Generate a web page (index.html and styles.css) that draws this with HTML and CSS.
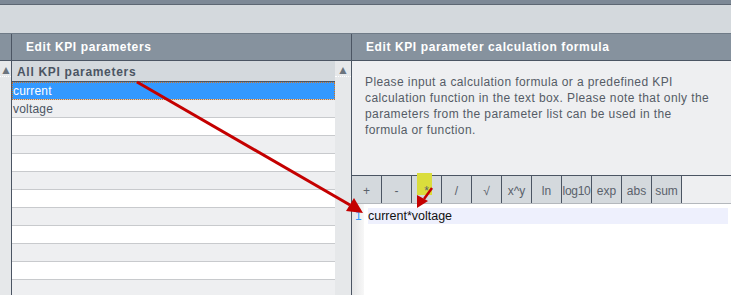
FILE: index.html
```html
<!DOCTYPE html>
<html lang="en">
  <head>
    <meta charset="UTF-8" />
    <meta name="viewport" content="width=device-width, initial-scale=1.0" />
    <title>Edit KPI parameters</title>
    <link rel="stylesheet" href="styles.css">
  </head>
  <body>
    <div class="topbar"></div>
    <div class="band"></div>

    <div class="main">
      <div class="strip">
        <div class="head"></div>
        <div class="strip-body">
          <span class="arrow-up">&#9650;</span>
        </div>
      </div>

      <div class="panel left">
        <div class="head">Edit KPI parameters</div>
        <div class="left-body">
          <div class="list">
            <div class="list-head">All KPI parameters</div>
            <div class="row selected">current</div>
            <div class="row odd">voltage</div>
            <div class="row"></div>
            <div class="row odd"></div>
            <div class="row"></div>
            <div class="row odd"></div>
            <div class="row"></div>
            <div class="row odd"></div>
            <div class="row"></div>
            <div class="row odd"></div>
            <div class="row"></div>
            <div class="row odd"></div>
          </div>
          <div class="scroll">
            <span class="arrow-up">&#9650;</span>
          </div>
        </div>
      </div>

      <div class="panel right">
        <div class="head">Edit KPI parameter calculation formula</div>
        <div class="right-body">
          <p class="hint">
            Please input a calculation formula or a predefined KPI<br>
            calculation function in the text box. Please note that only the<br>
            parameters from the parameter list can be used in the<br>
            formula or function.
          </p>
          <div class="tools">
            <button type="button">+</button>
            <button type="button">-</button>
            <button type="button" class="marked">*</button>
            <button type="button">/</button>
            <button type="button">&radic;</button>
            <button type="button">x^y</button>
            <button type="button">ln</button>
            <button type="button" class="narrow">log10</button>
            <button type="button">exp</button>
            <button type="button">abs</button>
            <button type="button">sum</button>
          </div>
          <div class="editor">
            <div class="gutter"><span class="lineno">1</span></div>
            <div class="code">
              <div class="code-line">current*voltage</div>
            </div>
          </div>
        </div>
      </div>
    </div>

    <!-- annotation arrows -->
    <svg class="notes" width="731" height="295" viewBox="0 0 731 295">
      <line x1="137" y1="82" x2="350" y2="205" stroke="#c40000" stroke-width="3" />
      <polygon points="363,213 346,211 354,198" fill="#c40000" />
      <line x1="432" y1="188" x2="424" y2="199" stroke="#c40000" stroke-width="2.5" />
      <polygon points="417,208 417,195 428,201" fill="#c40000" />
    </svg>
  </body>
</html>
```

FILE: styles.css
```css
body {
  margin: 0;
  width: 731px;
  height: 295px;
  overflow: hidden;
  position: relative;
  font-family: "Liberation Sans", Arial, sans-serif;
  font-size: 12px;
  background-color: #eeeff1;
}

.topbar {
  height: 4px;
  background-color: #7d8996;
  border-bottom: 1px solid #5d6773;
}

.band {
  height: 28px;
  background-color: #d4d9dd;
  border-bottom: 1px solid #6f7b87;
}

.main {
  display: grid;
  grid-template-columns: 11px 340px 380px;
  height: 261px;
}

.head {
  height: 26px;
  line-height: 26px;
  background-color: #86929e;
  border-bottom: 1px solid #4b5563;
  color: #ffffff;
  font-weight: bold;
  font-size: 12px;
  letter-spacing: 0.6px;
  white-space: nowrap;
}

.strip-body,
.scroll {
  background-color: #e6e8ea;
  height: 100%;
}

.strip {
  display: flex;
  flex-direction: column;
}

.strip-body {
  flex: 1;
}

.arrow-up {
  display: block;
  color: #6b747e;
  font-size: 12px;
  line-height: 10px;
  text-align: center;
  padding-top: 4px;
  padding-bottom: 1px;
  border-bottom: 1px dotted #ffffff;
}

.panel {
  border-left: 1px solid #4b5563;
  display: flex;
  flex-direction: column;
}

.left .head,
.right .head {
  padding-left: 14px;
}

.left-body {
  flex: 1;
  display: flex;
}

.list {
  width: 323px;
  background-color: #eeeff1;
}

.list-head {
  height: 20px;
  line-height: 23px;
  background-color: #d4d9dd;
  border-bottom: 1px solid #4b5563;
  color: #4b5563;
  font-weight: bold;
  font-size: 12px;
  letter-spacing: 0.7px;
  padding-left: 5px;
}

.row {
  height: 17px;
  line-height: 18px;
  border-bottom: 1px solid #c8cacd;
  background-color: #ffffff;
  color: #4b5563;
  padding-left: 1px;
  letter-spacing: 0.2px;
}

.row.odd {
  background-color: #eeeff1;
}

.row.selected {
  background-color: #3399ff;
  color: #ffffff;
  outline: 1px dotted #c8742a;
  outline-offset: -1px;
}

.scroll {
  width: 16px;
}

.right-body {
  flex: 1;
  display: flex;
  flex-direction: column;
}

.hint {
  margin: 0;
  height: 101px;
  padding: 13px 0 0 13px;
  line-height: 16px;
  color: #555c66;
  letter-spacing: 0.4px;
  white-space: nowrap;
}

.tools {
  display: flex;
  border-top: 1px solid #4b5563;
  border-bottom: 1px solid #b4b8bd;
  height: 27px;
}

.tools button {
  position: relative;
  isolation: isolate;
  width: 30px;
  height: 27px;
  margin: 0;
  padding: 2px 0 0;
  border: none;
  border-right: 1px solid #4b5563;
  background-color: #d4d9dd;
  color: #5a616b;
  font-family: "Liberation Sans", Arial, sans-serif;
  font-size: 12px;
  overflow: visible;
}

/* yellow highlight drawn over the screenshot */
.tools .marked::before {
  content: "";
  position: absolute;
  left: 5px;
  top: -3px;
  width: 15px;
  height: 22px;
  background-color: #dadd3c;
  z-index: -1;
}

.tools .narrow {
  letter-spacing: -0.3px;
}

.editor {
  flex: 1;
  display: flex;
  background-color: #ffffff;
}

.gutter {
  width: 12px;
  background: linear-gradient(to right, #e4e5e6, #f7f7f7);
  padding-top: 4px;
}

.lineno {
  display: block;
  color: #3399ff;
  line-height: 16px;
  padding-left: 3px;
}

.code {
  flex: 1;
  padding: 4px 3px 0 4px;
}

.code-line {
  height: 16px;
  line-height: 16px;
  background-color: #eef0fd;
  color: #111111;
  font-size: 12.5px;
}

.notes {
  position: absolute;
  left: 0;
  top: 0;
  pointer-events: none;
}
```
